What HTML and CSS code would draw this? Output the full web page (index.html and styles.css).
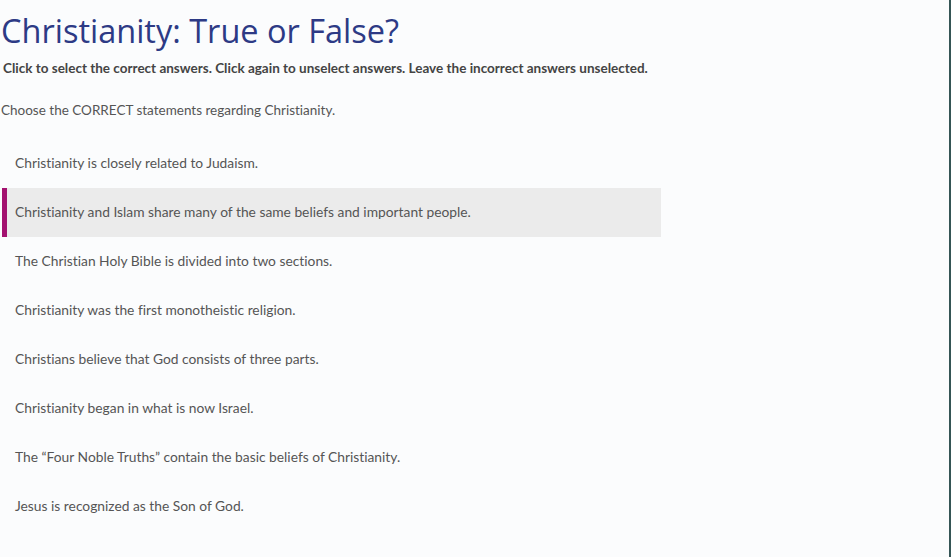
FILE: index.html
```html
<!DOCTYPE html>
<html lang="en">
<head>
<meta charset="utf-8">
<title>Christianity: True or False?</title>
<link rel="stylesheet" href="styles.css">
</head>
<body>
<div class="page">
  <h1 class="title">Christianity: True or False?</h1>
  <p class="instructions">Click to select the correct answers. Click again to unselect answers. Leave the incorrect answers unselected.</p>
  <p class="prompt">Choose the CORRECT statements regarding Christianity.</p>
  <ul class="answers">
    <li class="answer">Christianity is closely related to Judaism.</li>
    <li class="answer selected">Christianity and Islam share many of the same beliefs and important people.</li>
    <li class="answer">The Christian Holy Bible is divided into two sections.</li>
    <li class="answer">Christianity was the first monotheistic religion.</li>
    <li class="answer">Christians believe that God consists of three parts.</li>
    <li class="answer">Christianity began in what is now Israel.</li>
    <li class="answer">The “Four Noble Truths” contain the basic beliefs of Christianity.</li>
    <li class="answer">Jesus is recognized as the Son of God.</li>
  </ul>
</div>
</body>
</html>
```

FILE: styles.css
```css
html, body {
  margin: 0;
  padding: 0;
  background: #ffffff;
}

.page {
  width: 951px;
  height: 557px;
  box-sizing: border-box;
  border-right: 2px solid #355555;
  background: #fbfcfd;
  overflow: hidden;
  font-family: "Lato", "Open Sans", sans-serif;
  font-variant-ligatures: none;
  color: #555555;
}

.title {
  margin: 0;
  padding: 10px 0 0 1px;
  font-family: "Open Sans", sans-serif;
  font-weight: 400;
  font-size: 32.5px;
  line-height: 42px;
  color: #2d3a85;
}

.instructions {
  margin: 0;
  padding: 7px 0 0 3px;
  font-size: 13.5px;
  font-weight: 700;
  line-height: 18px;
  color: #444444;
}

.prompt {
  margin: 0;
  padding: 24px 0 0 1px;
  font-size: 13.5px;
  line-height: 18px;
  color: #555555;
}

.answers {
  list-style: none;
  margin: 20px 0 0 0;
  padding: 0;
  width: 661px;
}

.answer {
  margin-left: 2px;
  height: 49px;
  box-sizing: border-box;
  display: flex;
  align-items: center;
  padding: 0 0 2px 8px;
  border-left: 5px solid transparent;
  font-size: 13.8px;
  color: #555555;
}

.answer.selected {
  background: #ebebeb;
  border-left-color: #a3116f;
}
```
